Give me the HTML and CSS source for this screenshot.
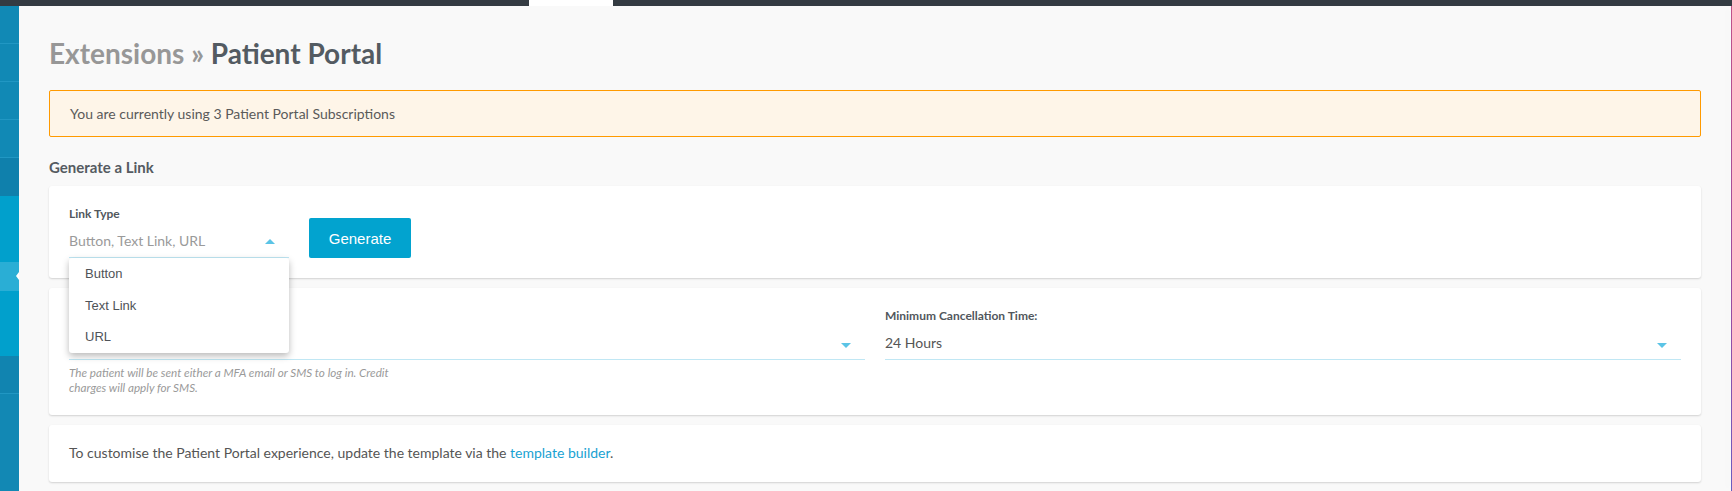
FILE: index.html
```html
<!DOCTYPE html>
<html>
<head>
<meta charset="utf-8">
<title>Extensions - Patient Portal</title>
<link rel="stylesheet" href="styles.css">
</head>
<body>
<div class="topbar"><span class="topbar-tab"></span></div>
<div class="layout">
	<nav class="sidebar">
		<a class="nav-item"></a>
		<a class="nav-item"></a>
		<a class="nav-item"></a>
		<a class="nav-item"></a>
		<a class="nav-item nav-dark"></a>
		<div class="nav-group">
			<a class="nav-sub"></a>
			<a class="nav-sub"></a>
			<a class="nav-sub active"></a>
			<a class="nav-sub nav-sub-tall"></a>
		</div>
		<a class="nav-item nav-after"></a>
		<a class="nav-item nav-last"></a>
	</nav>

	<main class="main">
		<h1 class="page-title"><span class="crumb">Extensions &raquo;</span> Patient Portal</h1>

		<div class="alert">You are currently using 3 Patient Portal Subscriptions</div>

		<h2 class="section-title">Generate a Link</h2>

		<div class="card card-generate">
			<div class="field field-linktype">
				<label class="field-label">Link Type</label>
				<div class="select open">
					<span class="placeholder">Button, Text Link, URL</span>
					<span class="caret caret-up"></span>
				</div>
				<ul class="menu">
					<li>Button</li>
					<li>Text Link</li>
					<li>URL</li>
				</ul>
			</div>
			<button class="btn">Generate</button>
		</div>

		<div class="card card-settings">
			<div class="field">
				<label class="field-label">&nbsp;</label>
				<div class="select">
					<span class="value">&nbsp;</span>
					<span class="caret"></span>
				</div>
				<p class="help">The patient will be sent either a MFA email or SMS to log in. Credit charges will apply for SMS.</p>
			</div>
			<div class="field">
				<label class="field-label">Minimum Cancellation Time:</label>
				<div class="select">
					<span class="value">24 Hours</span>
					<span class="caret"></span>
				</div>
			</div>
		</div>

		<div class="card card-note">
			To customise the Patient Portal experience, update the template via the <a href="#" class="link">template builder</a>.
		</div>
	</main>
	<div class="edge"></div>
</div>
</body>
</html>
```

FILE: styles.css
```css
html, body{
	margin:0;
	height:100%;
}
body{
	font:14px/20px Lato, "Open Sans", sans-serif;
	color:#555;
	background:#f9f9f9;
	overflow:hidden;
}

.topbar{height:6px; background:#343b42; position:relative;}
.topbar-tab{position:absolute; left:529px; top:0; width:84px; height:6px; background:#fff;}

.layout{display:flex; height:485px;}

/* sidebar */
.sidebar{width:19px; flex:none; display:flex; flex-direction:column; background:#1288b4;}
.nav-item{display:block; height:37px; background:#1189b5; border-bottom:1px solid #2197c3;}
.nav-dark{background:#0f80ac; border-bottom:0; height:38px;}
.nav-group{background:#01a0cc; display:flex; flex-direction:column;}
.nav-sub{display:block; height:33px;}
.nav-sub.active{height:29px; background:#2aaed5; position:relative;}
.nav-sub.active:after{
	content:"";
	position:absolute;
	right:0; top:10px;
	border-style:solid;
	border-width:4px 3px 4px 0;
	border-color:transparent #fff transparent transparent;
}
.nav-sub-tall{height:65px;}
.nav-after{background:#1184b0;}
.nav-last{border-bottom:0; flex:1; background:#1288b4;}

/* main */
.main{flex:1; padding:30px 30px 0; min-width:0;}
.page-title{
	margin:0 0 20px;
	font-size:28px;
	line-height:34px;
	font-weight:700;
	color:#535b62;
}
.crumb{color:#979797;}

.alert{
	border:1px solid #ff9a00;
	border-radius:2px;
	background:#fef5e8;
	padding:12px 20px;
	line-height:21px;
	color:#5a5a5a;
}

.section-title{
	margin:20px 0 9px;
	font-size:15px;
	line-height:20px;
	font-weight:700;
	color:#555b61;
}

.card{
	background:#fff;
	border-radius:3px;
	box-shadow:0 1px 2px rgba(0,0,0,.16);
	margin-bottom:10px;
	padding:20px;
}
.card-generate{display:flex; align-items:flex-end; gap:20px;}
.card-settings{display:grid; grid-template-columns:1fr 1fr; column-gap:20px;}
.card-note{padding:18px 20px 19px;}

.field{position:relative;}
.field-linktype{width:220px;}
.field-label{
	display:block;
	font-size:12px;
	line-height:15px;
	font-weight:700;
	color:#51575d;
}
.select{
	position:relative;
	padding:10px 30px 6px 0;
	border-bottom:1px solid #c0e7f4;
	line-height:20px;
}
.placeholder{color:#9a9a9a;}
.value{color:#555;}
.caret{
	position:absolute;
	right:14px; top:20px;
	border-style:solid;
	border-width:5px 5px 0 5px;
	border-color:#5bc4e6 transparent transparent transparent;
}
.caret-up{
	top:18px;
	border-width:0 5px 5px 5px;
	border-color:transparent transparent #5bc4e6 transparent;
}

.menu{
	position:absolute;
	left:0; top:100%;
	width:220px;
	margin:0; padding:0;
	list-style:none;
	background:#fff;
	border-radius:3px;
	box-shadow:0 3px 7px rgba(0,0,0,.28);
	z-index:10;
}
.menu li{
	padding-left:16px;
	font:13px/31.7px "Liberation Sans", Arial, sans-serif;
	color:#4f5358;
}

.btn{
	width:102px;
	height:40px;
	border:0;
	border-radius:2px;
	background:#02a3cf;
	color:#fff;
	font:15px "Liberation Sans", Arial, sans-serif;
	padding:0;
}

.help{
	margin:5px 0 0;
	max-width:345px;
	font-size:11.7px;
	line-height:15px;
	font-style:italic;
	color:#9a9a9a;
}

.link{color:#18a2d2; text-decoration:none;}

.edge{
	width:1px;
	flex:none;
	background:linear-gradient(#c0508a, #9a4aa0 60%, #6a5cc0);
	box-shadow:-4px 0 6px rgba(0,0,0,.04);
}
```
